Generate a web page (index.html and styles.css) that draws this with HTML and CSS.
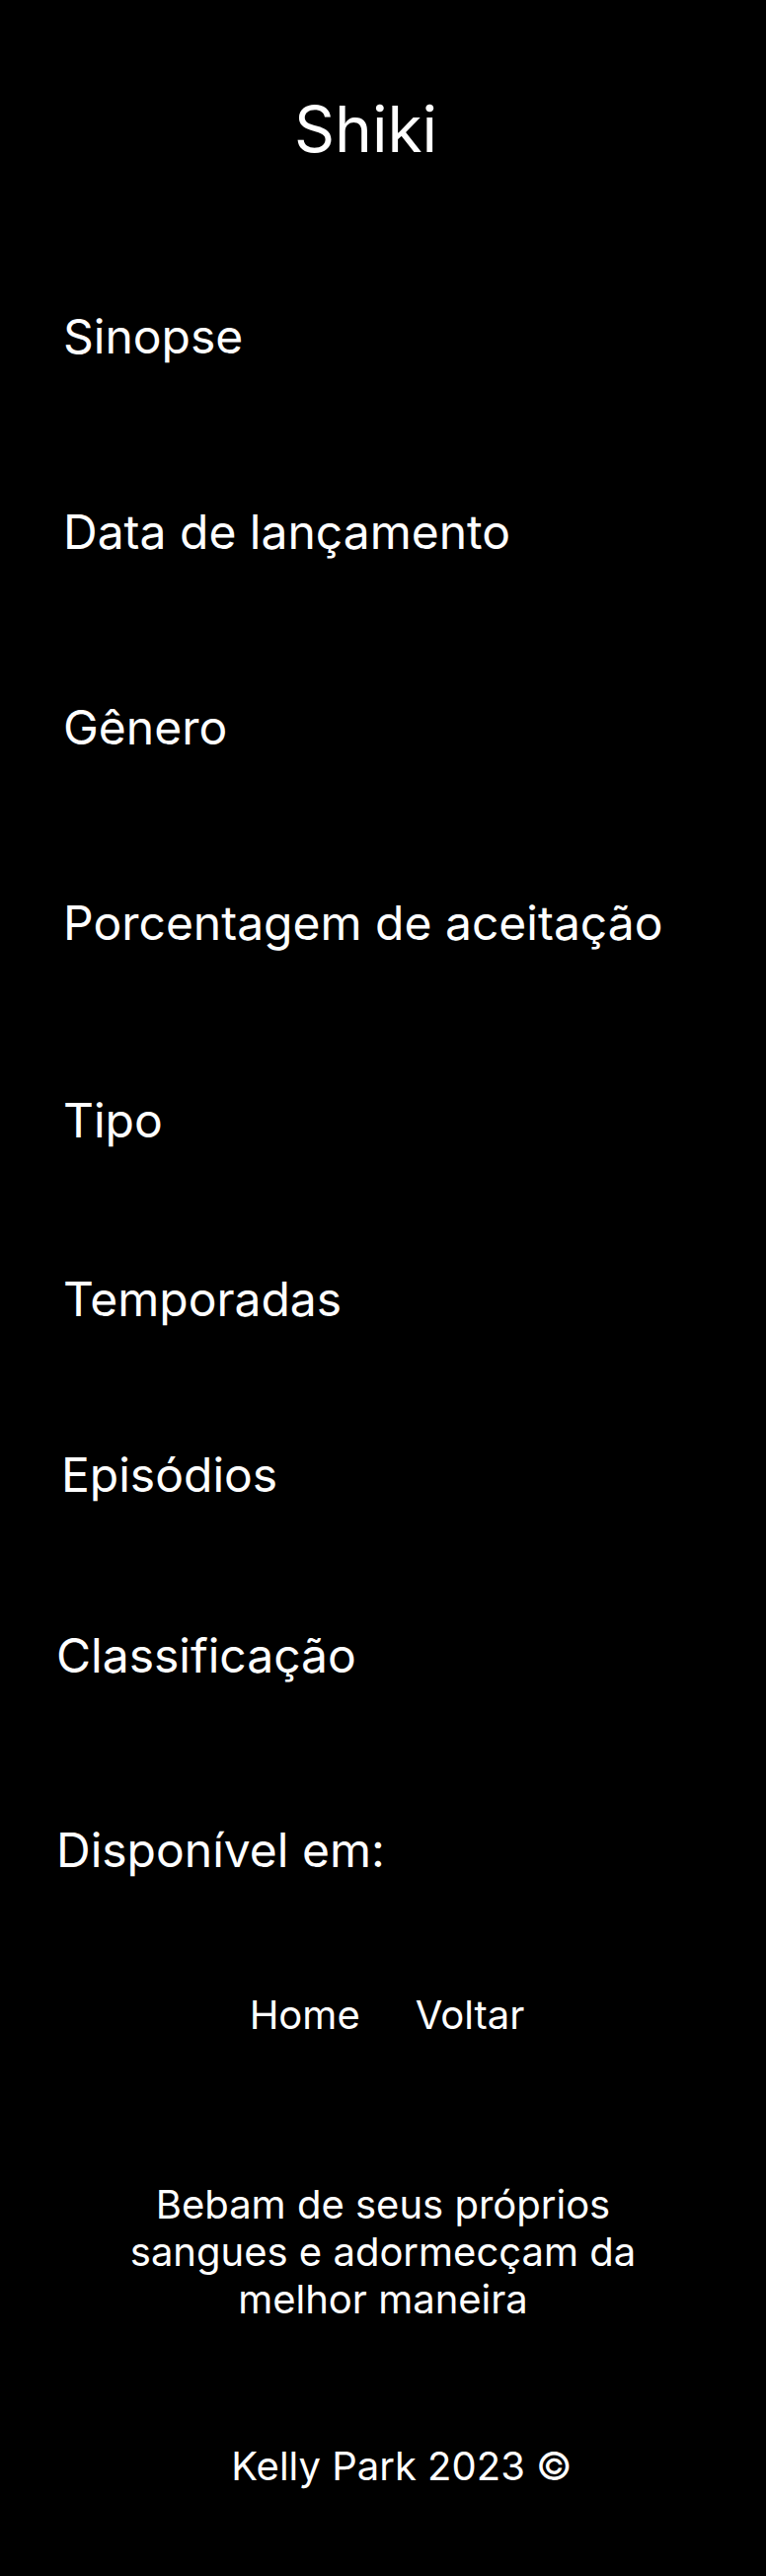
FILE: index.html
```html
<!DOCTYPE html>
<html lang="pt-BR">
<head>
<meta charset="utf-8">
<title>Shiki</title>
<link rel="stylesheet" href="styles.css">
</head>
<body>
<div class="page">
  <header class="header">
    <h1 class="title">Shiki</h1>
  </header>
  <main class="info-list">
    <h2 class="info info--first">Sinopse</h2>
    <h2 class="info">Data de lançamento</h2>
    <h2 class="info">Gênero</h2>
    <h2 class="info">Porcentagem de aceitação</h2>
    <h2 class="info info--wide">Tipo</h2>
    <h2 class="info info--tight">Temporadas</h2>
    <h2 class="info info--tighter">Episódios</h2>
    <h2 class="info info--mid info--left">Classificação</h2>
    <h2 class="info info--left">Disponível em:</h2>
  </main>
  <nav class="nav">
    <a class="nav-link" href="#">Home</a>
    <a class="nav-link" href="#">Voltar</a>
  </nav>
  <footer class="footer">
    <p class="quote">Bebam de seus próprios sangues e adormecçam da melhor maneira</p>
    <p class="copy">Kelly Park 2023 ©</p>
  </footer>
</div>
</body>
</html>
```

FILE: styles.css
```css
html, body {
  margin: 0;
  padding: 0;
  background: #000;
}

.page {
  min-height: 2609px;
  background: #000;
  color: #fff;
  font-family: Inter, "Noto Sans", sans-serif;
  font-weight: 400;
  display: flex;
  flex-direction: column;
}

.header {
  padding-top: 92px;
  display: flex;
  justify-content: center;
}

.title {
  margin: 0;
  font-size: 64px;
  line-height: 78px;
  font-weight: 400;
  padding-right: 35px;
}

.info-list {
  display: flex;
  flex-direction: column;
}

.info {
  margin: 140px 0 0;
  padding-left: 64px;
  font-size: 48px;
  line-height: 58px;
  font-weight: 400;
}

.info--first { margin-top: 142px; }
.info--wide { margin-top: 142px; }
.info--tight { margin-top: 123px; }
.info--tighter { margin-top: 120px; padding-left: 62px; }
.info--mid { margin-top: 125px; }
.info--left { padding-left: 57px; }
.info-list .info:last-child { margin-top: 139px; }

.nav {
  margin-top: 114px;
  display: flex;
  justify-content: center;
  gap: 56px;
  padding-left: 8px;
}

.nav-link {
  color: #fff;
  text-decoration: none;
  font-size: 40px;
  line-height: 48px;
}

.footer {
  display: flex;
  flex-direction: column;
  align-items: center;
}

.quote {
  margin: 144px 0 0;
  width: 560px;
  text-align: center;
  font-size: 40px;
  line-height: 48px;
}

.copy {
  margin: 121px 0 0;
  font-size: 40px;
  line-height: 48px;
  padding-left: 38px;
}
```
